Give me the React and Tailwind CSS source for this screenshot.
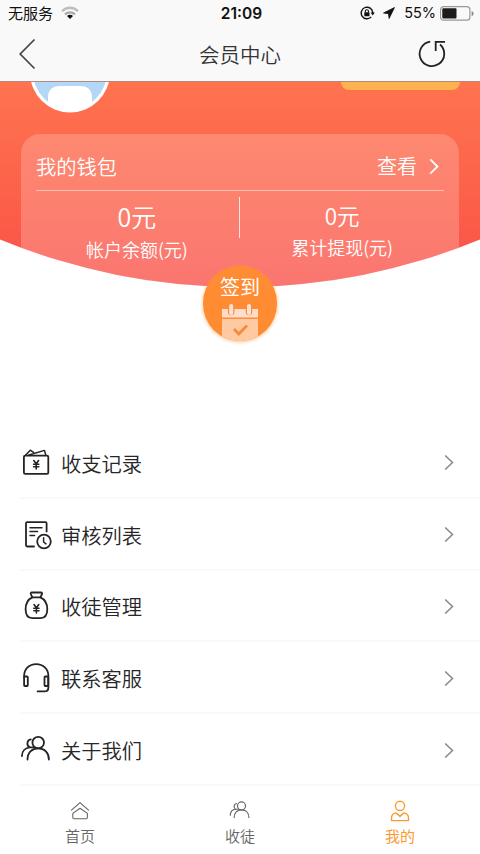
import React from "react";

const WalletIcon = () => (
  <svg viewBox="0 0 32 32" className="w-8 h-8" fill="none" stroke="#242424" strokeWidth="1.8" strokeLinejoin="round" strokeLinecap="round">
    <rect x="3.9" y="8.7" width="24.4" height="18.2" rx="1.3" />
    <path d="M5.5 8.2 10.3 3.2l3.2 2.2M9 8 24.5 3.4l1.3 4.8" strokeWidth="1.5" />
    <path d="m13.8 13.6 2.4 3.2 2.4-3.2M13.6 17.2h5.2M13.6 19.7h5.2M16.2 17v5" strokeWidth="1.6" />
  </svg>
);

const AuditIcon = () => (
  <svg viewBox="0 0 32 32" className="w-8 h-8" fill="none" stroke="#242424" strokeWidth="1.8" strokeLinejoin="round" strokeLinecap="round">
    <path d="M14 27.500H7.200a1.200 1.200 0 0 1-1.200-1.200V4.300a1.200 1.200 0 0 1 1.200-1.200h18.200a1.200 1.200 0 0 1 1.200 1.200V12.500" />
    <path d="M10 8.800h12M10 12.600h7.600M10 16.400h4.600" strokeWidth="1.5" />
    <circle cx="24" cy="22.5" r="6.800" />
    <path d="M23.600 18.700V23l2.400 1.900" strokeWidth="1.5" />
  </svg>
);

const MoneyBagIcon = () => (
  <svg viewBox="0 0 32 32" className="w-8 h-8" fill="none" stroke="#242424" strokeWidth="1.8" strokeLinejoin="round" strokeLinecap="round">
    <path d="M12.300 7.400 10.800 4q-.5-1.500 1-1.500h9.200q1.500 0 1 1.500l-1.600 3.400z" />
    <path d="M12.300 7.400C8.200 9.300 5.600 14 5.600 19.300c0 6.200 2.300 8.800 6.700 8.800h8.200c4.500 0 6.800-2.600 6.800-8.800 0-5.300-2.700-10-6.900-11.900" />
    <path d="m14 14.600 2.400 3.200 2.400-3.200M13.800 18.200h5.200M13.800 20.700h5.200M16.400 18v5" strokeWidth="1.6" />
  </svg>
);

const HeadsetIcon = () => (
  <svg viewBox="0 0 32 32" className="w-8 h-8" fill="none" stroke="#242424" strokeWidth="1.8" strokeLinejoin="round" strokeLinecap="round">
    <path d="M4.100 15.600v-1.400C4.100 7 9.200 2.100 16.200 2.100S28.400 7 28.400 14.200v11.200q0 4-4 4h-6.800" />
    <rect x="4.100" y="14.500" width="3.700" height="9.500" rx=".8" />
    <rect x="24.500" y="14.500" width="3.700" height="9.500" rx=".8" />
  </svg>
);

const PeopleIcon = ({ className, strokeWidth }) => (
  <svg viewBox="0 0 32 32" className={className} fill="none" stroke="currentColor" strokeWidth={strokeWidth} strokeLinecap="round">
    <circle cx="18.200" cy="8.600" r="5.800" />
    <path d="M7.500 25.600c0-7 4.400-11.200 10.700-11.200s10.700 4.200 10.700 11.200" />
    <path d="M10.800 5.300c-3.800.5-4.800 6.100-1 8.100M9.800 13.400C5.200 13.800 2 17.300 1.900 22M9.800 13.400h4" />
  </svg>
);

const HomeIcon = () => (
  <svg viewBox="0 0 22 22" className="w-[22px] h-[22px]" fill="none" stroke="currentColor" strokeWidth="1.1" strokeLinejoin="round" strokeLinecap="round">
    <path d="M2.500 10.200 11 2.600l8.500 7.600" />
    <path d="M3.800 13.400 11 8.300l7.400 5.100v3.800q0 1.500-1.500 1.500H5.300q-1.500 0-1.500-1.500z" />
  </svg>
);

const MineIcon = () => (
  <svg viewBox="0 0 22 22" className="w-[22px] h-[22px]" fill="none" stroke="currentColor" strokeWidth="1.4" strokeLinejoin="round">
    <circle cx="11" cy="5.900" r="4.600" />
    <path d="M7 12.900c-3.100.7-4.500 2.100-4.500 5v2.700h17v-2.700c0-2.900-1.400-4.300-4.500-5l-4 3.500z" />
  </svg>
);

const Chevron = ({ className, strokeWidth = "1.6" }) => (
  <svg viewBox="0 0 10 18" className={className} fill="none" stroke="currentColor" strokeWidth={strokeWidth}>
    <path d="m1 1.500 7.700 7.500L1 16.500" />
  </svg>
);

const menu = [
  { title: "收支记录", icon: <WalletIcon /> },
  { title: "审核列表", icon: <AuditIcon /> },
  { title: "收徒管理", icon: <MoneyBagIcon /> },
  { title: "联系客服", icon: <HeadsetIcon /> },
  { title: "关于我们", icon: <PeopleIcon className="w-8 h-8 text-[#242424]" strokeWidth="1.8" /> },
];

const tabs = [
  { title: "首页", icon: <HomeIcon /> },
  { title: "收徒", icon: <PeopleIcon className="w-[22px] h-[22px]" strokeWidth="1.7" /> },
  { title: "我的", icon: <MineIcon />, active: true },
];

const StatusBar = () => (
  <div className="h-[27px] grid grid-cols-3 items-center text-[#111] text-[15px] leading-none">
    <div className="flex items-center gap-2 pl-2 font-normal">
      <span className="pb-0.5">无服务</span>
      <svg viewBox="0 0 18 14" className="w-[18px] h-[14px] mb-px" fill="none" strokeWidth="2.3">
        <path d="M1 5.200C5.500.6 12.500.6 17 5.200" stroke="#bdbdbd" />
        <path d="M4 8.400c2.900-2.800 7.100-2.800 10 0" stroke="#aaa" />
        <path d="m9 13-3-3.100c1.700-1.500 4.300-1.500 6 0z" fill="#111" />
      </svg>
    </div>
    <div className="text-center font-['Inter','Liberation_Sans',sans-serif] font-semibold text-[15.5px] pl-[3px]">21:09</div>
    <div className="flex items-center justify-end pr-1.5 font-['Inter','Liberation_Sans',sans-serif] font-normal">
      <svg viewBox="0 0 15 14" className="w-[15px] h-[14px] mr-2 mb-px" fill="none" stroke="#111" strokeWidth="1.4">
        <path d="M11.300 10.900A5.800 5.800 0 1 1 12.800 7" />
        <path d="M10.600 6.600h4.200l-2.100 2.900z" fill="#111" stroke="none" />
        <rect x="4.300" y="6.200" width="5.200" height="4" rx=".5" fill="#111" stroke="none" />
        <path d="M5.300 6.500V5.300a1.600 1.600 0 0 1 3.200 0v1.200" strokeWidth="1.1" />
      </svg>
      <svg viewBox="0 0 12 12" className="w-3 h-3 mr-[9px] mb-px" fill="#111" stroke="#111" strokeWidth=".8" strokeLinejoin="round">
        <path d="M11.500.5.5 6l5 .7.6 4.800z" />
      </svg>
      <span className="text-[14.5px] mr-1">55%</span>
      <svg viewBox="0 0 34 15" className="w-[34px] h-[15px]" fill="none">
        <rect x=".6" y=".6" width="29.300" height="13.600" rx="3" stroke="#999" strokeWidth="1.2" />
        <rect x="2.300" y="2.300" width="14.200" height="10.200" rx="1" fill="#1c1c1c" />
        <path d="M31.600 5v5.200c2.600-.8 2.600-4.400 0-5.200z" fill="#888" />
      </svg>
    </div>
  </div>
);

const Header = () => (
  <div className="h-[55px] grid grid-cols-3 items-center border-b border-[#b5897d] px-[18px]">
    <svg viewBox="0 0 18 32" className="w-[18px] h-8" fill="none" stroke="#444" strokeWidth="1.7">
      <path d="M16.500 1.500 2.200 16l14.300 14.500" />
    </svg>
    <h1 className="text-[20.5px] leading-none text-[#333] text-center">会员中心</h1>
    <svg viewBox="0 0 28 28" className="w-7 h-7 justify-self-end mr-4" fill="none" stroke="#222" strokeWidth="1.8">
      <path d="M12.200 1.600A12.300 12.300 0 1 0 22 4.500" />
      <path d="M17.700 11V1.900h9.300" />
    </svg>
  </div>
);

const Amount = ({ value, label, valueClass, labelClass }) => (
  <div className="flex-1 flex flex-col items-center text-white">
    <div className={valueClass}>{value}</div>
    <div className={labelClass}>{label}</div>
  </div>
);

const Hero = () => (
  <div className="relative h-[345px]">
    <div className="h-[205px] overflow-hidden bg-linear-to-b from-[#ff7350] via-[#fc5f49] via-60% to-[#f94f49] [clip-path:circle(630px_at_50%_-425px)]">
      <div className="h-[52px] flex items-start justify-between pl-[30px] pr-5">
        <svg viewBox="0 0 80 31" className="w-20 h-[31px]">
          <circle cx="40" cy="-9.500" r="40" fill="#fff" />
          <circle cx="40" cy="-9.500" r="36.800" fill="#b4d7f7" />
          <path d="M18 23.500V16Q18 4 30 4h20Q62 4 62 16v7.500A40 40 0 0 1 18 23.500z" fill="#fff" />
        </svg>
        <div className="w-[119px] h-2 rounded-b-[14px] bg-[#ffb250]" />
      </div>
      <div className="mx-[21px] h-[170px] rounded-[19px] bg-linear-to-b from-white/20 to-white/22 px-[15px] text-white">
        <div className="h-[57px] flex items-center justify-between border-b-[1.5px] border-[#ffbfb0] pt-2">
          <span className="text-[20.3px] leading-none">我的钱包</span>
          <span className="flex items-center text-[20px] leading-none">
            查看
            <Chevron className="w-[10px] h-[17px] ml-3 mr-[5px]" strokeWidth="1.9" />
          </span>
        </div>
        <div className="flex items-start -ml-px">
          <Amount
            value="0元"
            label="帐户余额(元)"
            valueClass="text-[25px] leading-[30px] mt-[10px]"
            labelClass="text-[18px] leading-6 mt-1.5"
          />
          <div className="w-[1.5px] h-[41px] mt-1.5 bg-white/80" />
          <Amount
            value="0元"
            label="累计提现(元)"
            valueClass="text-[22.5px] leading-[30px] mt-[9px]"
            labelClass="text-[18px] leading-6 mt-[5px]"
          />
        </div>
      </div>
    </div>
    {/* check-in button sits over the curve */}
    <button className="absolute left-[203px] top-[184px] w-[74px] h-[75px] rounded-full overflow-hidden bg-[#ff8b33] shadow-[0_1px_3px_1px_rgba(255,160,80,0.45)] flex flex-col items-center text-white">
      <span className="text-[20px] leading-6 mt-[9px] font-normal">签到</span>
      <svg viewBox="0 0 38 38" className="w-[38px] h-[38px] mt-1 shrink-0">
        <path d="M1 6h36v8.500H1z" fill="#ffdccc" />
        <path d="M1 16h36v22H1z" fill="#ffc9a2" />
        <g stroke="#ff8b33" strokeWidth="6.5" strokeLinecap="round">
          <path d="M10.200 4v5M28 4v5" />
        </g>
        <g stroke="#ffe3d6" strokeWidth="4" strokeLinecap="round">
          <path d="M10.200 3v7M28 3v7" />
        </g>
        <path d="m13 26 4.800 5L26 22.500" fill="none" stroke="#f98a3a" strokeWidth="2.8" />
      </svg>
    </button>
  </div>
);

const App = () => {
  return (
    <div className="w-full h-[854px] overflow-hidden flex flex-col bg-white font-[350] font-['Noto_Sans_CJK_SC',sans-serif]">
      <div className="bg-[#f9f9f9]">
        <StatusBar />
        <Header />
      </div>

      <Hero />

      <ul className="pl-5">
        {menu.map((item) => (
          <li key={item.title} className="h-[71.8px] flex items-center border-b-2 border-[#f9f9f9] pt-0.5 pr-[26px]">
            {item.icon}
            <span className="ml-[9px] text-[20.3px] leading-none text-[#262626] flex-1">{item.title}</span>
            <Chevron className="w-[10px] h-[17px] text-[#888]" />
          </li>
        ))}
      </ul>

      <nav className="flex-1 grid grid-cols-3">
        {tabs.map((tab) => (
          <div
            key={tab.title}
            className={`flex flex-col items-center pt-[14px] ${tab.active ? "text-[#fb9a33] font-normal" : "text-[#666]"}`}
          >
            {tab.icon}
            <span className="text-[15px] leading-5 mt-[4px]">{tab.title}</span>
          </div>
        ))}
      </nav>
    </div>
  );
};

export default App;
